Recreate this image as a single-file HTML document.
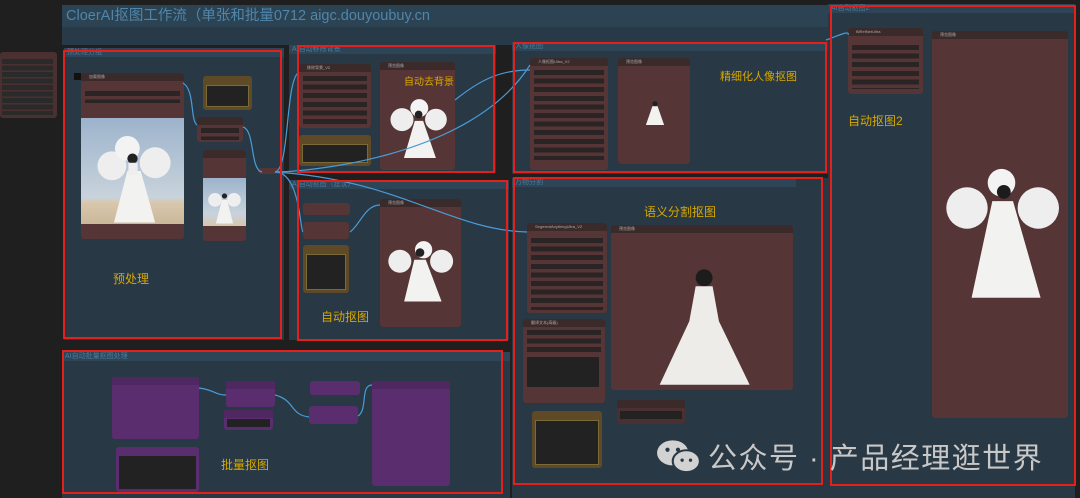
<!DOCTYPE html>
<html><head><meta charset="utf-8"><style>
*{margin:0;padding:0;box-sizing:border-box}
body{width:1080px;height:498px;background:#1f1f1f;position:relative;overflow:hidden;font-family:"Liberation Sans","Noto Sans CJK SC",sans-serif}
div{position:absolute}
.g{background:#283844}
.gh{background:#2d4557;height:9px;left:0;right:0;top:0;font-size:7px;color:#4d7b9b;padding-left:3px;line-height:9px}
.r{border:2px solid #e3201c}
.n{background:#553535;border-radius:3px}
.nh{background:#3b2a2a;height:8px;left:0;right:0;top:0;border-radius:3px 3px 0 0;font-size:4px;color:#aaa;padding-left:8px;line-height:8px}
.rows{left:4px;right:4px;background:repeating-linear-gradient(#2a2424 0 5px,transparent 5px 8.6px)}
.note{background:#5e4a26;border-radius:3px}
.note i{position:absolute;left:3px;right:3px;top:9px;bottom:3px;background:#222;border:1px solid #7a6a3a}
.p{background:#5a2d6e;border-radius:3px}
.ph{background:#4f2862;height:8px;left:0;right:0;top:0}
.lab{color:#d8a800;font-size:12px;white-space:nowrap}
.id{background:#111;width:7px;height:7px}
svg{position:absolute}
</style></head><body>
<!-- groups -->
<div class="g" style="left:62px;top:5px;width:768px;height:40px;background:#283a48"></div>
<div style="left:62px;top:5px;width:768px;height:22px;background:#2c4354;color:#4f86aa;font-size:14.5px;line-height:22px;padding-left:4px">CloerAI抠图工作流（单张和批量0712 aigc.douyoubuy.cn</div>
<div class="g" style="left:64px;top:48px;width:220px;height:292px"><div class="gh">预处理分组</div></div>
<div class="g" style="left:289px;top:45px;width:207px;height:128px"><div class="gh">AI自动移除背景</div></div>
<div class="g" style="left:289px;top:180px;width:220px;height:160px"><div class="gh">AI自动抠图（建议）</div></div>
<div class="g" style="left:512px;top:42px;width:316px;height:132px"><div class="gh">人像抠图</div></div>
<div class="g" style="left:512px;top:178px;width:284px;height:320px"><div class="gh">万物分割</div></div>
<div class="g" style="left:62px;top:352px;width:448px;height:146px"><div class="gh">AI自动批量抠图处理</div></div>
<div class="g" style="left:828px;top:4px;width:247px;height:494px"><div class="gh">AI自动抠图2</div></div>
<div style="left:796px;top:178px;width:32px;height:320px;background:#283844"></div>
<!-- left panel -->
<div class="n" style="left:0;top:52px;width:57px;height:66px;background:#4a3030"><div class="rows" style="left:2px;top:7px;height:56px;background:repeating-linear-gradient(#2a2a2a 0 5px,transparent 5px 6.5px)"></div></div>

<!-- 预处理 -->
<div class="id" style="left:74px;top:73px"></div>
<div class="n" style="left:81px;top:73px;width:103px;height:166px"><div class="nh">加载图像</div><div class="rows" style="top:18px;height:12px"></div>
<div style="left:0;top:45px;width:103px;height:106px;background:linear-gradient(#9db3cc,#c8d3dc 75%,#d9c7ad 80%,#cbb89a)"></div>
<svg style="left:0;top:45px" width="103" height="106" viewBox="0 0 100 100"><circle cx="30" cy="45" r="14" fill="#eee"/><circle cx="72" cy="42" r="15" fill="#eee"/><circle cx="45" cy="28" r="12" fill="#f3f3f3"/><path d="M45 50 L58 50 L72 100 L32 100Z" fill="#f2f2f0"/><circle cx="50" cy="38" r="5" fill="#222"/><rect x="46" y="42" width="9" height="12" fill="#eee"/></svg></div>
<div class="note" style="left:203px;top:76px;width:49px;height:34px"><i></i></div>
<div class="n" style="left:197px;top:117px;width:46px;height:25px"><div class="nh"></div><div class="rows" style="top:11px;height:12px"></div></div>
<div class="n" style="left:203px;top:150px;width:43px;height:91px"><div class="nh"></div>
<div style="left:0;top:28px;width:43px;height:48px;background:linear-gradient(#9db3cc,#c8d3dc 75%,#d9c7ad)"></div>
<svg style="left:0;top:28px" width="43" height="48" viewBox="0 0 100 100"><circle cx="28" cy="45" r="16" fill="#eee"/><circle cx="72" cy="45" r="16" fill="#eee"/><path d="M44 45 L56 45 L70 100 L30 100Z" fill="#f2f2f0"/><circle cx="50" cy="36" r="6" fill="#222"/></svg></div>
<div class="n" style="left:258px;top:168px;width:22px;height:6px"></div>

<!-- 自动去背景 -->
<div class="n" style="left:299px;top:64px;width:72px;height:64px"><div class="nh">移除背景_V2</div><div class="rows" style="top:12px;height:50px"></div></div>
<div class="note" style="left:299px;top:135px;width:72px;height:31px"><i></i></div>
<div class="n" style="left:380px;top:62px;width:75px;height:108px"><div class="nh">预览图像</div>
<svg style="left:6px;top:28px" width="64" height="72" viewBox="0 0 100 100"><circle cx="25" cy="40" r="18" fill="#eee"/><circle cx="78" cy="40" r="17" fill="#eee"/><circle cx="52" cy="22" r="14" fill="#f3f3f3"/><path d="M45 42 L58 42 L78 100 L28 100Z" fill="#f2f2f0"/><circle cx="51" cy="32" r="6" fill="#222"/></svg></div>
<div class="lab" style="left:404px;top:73px;font-size:10px">自动去背景</div>

<!-- 人像抠图 -->
<div class="n" style="left:530px;top:58px;width:78px;height:112px"><div class="nh">人像抠图Ultra_V2</div><div class="rows" style="top:12px;height:90px"></div></div>
<div class="n" style="left:618px;top:58px;width:72px;height:106px"><div class="nh">预览图像</div>
<svg style="left:24px;top:36px" width="26" height="36" viewBox="0 0 100 100"><circle cx="50" cy="18" r="10" fill="#222"/><path d="M40 28 L60 28 L85 100 L15 100Z" fill="#f2f2f0"/></svg></div>
<div class="lab" style="left:720px;top:68px;font-size:11px">精细化人像抠图</div>

<!-- 自动抠图 -->
<div class="n" style="left:303px;top:203px;width:47px;height:12px"></div>
<div class="n" style="left:303px;top:222px;width:46px;height:17px"></div>
<div class="note" style="left:303px;top:245px;width:46px;height:48px"><i></i></div>
<div class="n" style="left:380px;top:199px;width:81px;height:128px"><div class="nh">预览图像</div>
<svg style="left:4px;top:18px" width="72" height="100" viewBox="0 0 100 100"><circle cx="22" cy="42" r="16" fill="#eee"/><circle cx="80" cy="42" r="16" fill="#eee"/><circle cx="55" cy="26" r="12" fill="#f3f3f3"/><path d="M42 40 L58 40 L80 98 L28 98Z" fill="#f2f2f0"/><circle cx="50" cy="30" r="6" fill="#222"/></svg></div>
<div class="lab" style="left:321px;top:308px">自动抠图</div>
<div class="lab" style="left:113px;top:270px">预处理</div>

<!-- 万物分割 -->
<div class="lab" style="left:644px;top:203px">语义分割抠图</div>
<div class="n" style="left:527px;top:223px;width:80px;height:90px"><div class="nh">SegmentAnythingUltra_V2</div><div class="rows" style="top:15px;height:72px"></div></div>
<div class="n" style="left:523px;top:319px;width:82px;height:84px"><div class="nh">翻译文本(高级)</div><div class="rows" style="top:11px;height:22px"></div><div style="left:4px;top:38px;width:72px;height:30px;background:#222"></div></div>
<div class="note" style="left:532px;top:411px;width:70px;height:57px"><i></i></div>
<div class="n" style="left:611px;top:225px;width:182px;height:165px"><div class="nh">预览图像</div>
<svg style="left:36px;top:38px" width="110" height="127" viewBox="0 0 100 120"><circle cx="52" cy="14" r="8" fill="#1c1c1c"/><path d="M44 22 L60 22 L66 55 L95 115 L10 115 L38 55Z" fill="#eeece8"/></svg></div>
<div class="n" style="left:617px;top:400px;width:68px;height:24px;background:#4a3030"><div class="nh"></div><div style="left:3px;top:11px;width:62px;height:8px;background:#222"></div></div>

<!-- right -->
<div class="n" style="left:848px;top:28px;width:75px;height:66px"><div class="nh">BiRefNetUltra</div><div class="rows" style="top:17px;height:44px"></div></div>
<div class="n" style="left:932px;top:31px;width:136px;height:387px"><div class="nh">预览图像</div>
<svg style="left:12px;top:130px" width="115" height="140" viewBox="0 0 100 120"><circle cx="20" cy="40" r="18" fill="#eee"/><circle cx="82" cy="40" r="18" fill="#eee"/><circle cx="50" cy="18" r="12" fill="#f3f3f3"/><circle cx="52" cy="26" r="6" fill="#1c1c1c"/><path d="M42 34 L60 34 L84 118 L24 118Z" fill="#f2f2f0"/></svg></div>
<div class="lab" style="left:848px;top:112px">自动抠图2</div>

<!-- batch -->
<div class="p" style="left:112px;top:377px;width:87px;height:62px"><div class="ph"></div></div>
<div class="p" style="left:226px;top:381px;width:49px;height:26px"><div class="ph"></div></div>
<div class="p" style="left:224px;top:410px;width:49px;height:20px"><div class="ph"></div><div style="left:3px;top:9px;width:43px;height:8px;background:#222"></div></div>
<div class="p" style="left:310px;top:381px;width:50px;height:14px"></div>
<div class="p" style="left:309px;top:406px;width:49px;height:18px"></div>
<div class="p" style="left:372px;top:381px;width:78px;height:105px"><div class="ph"></div></div>
<div class="p" style="left:116px;top:447px;width:83px;height:45px"><div style="left:3px;top:9px;right:3px;bottom:3px;background:#222"></div></div>
<div class="lab" style="left:221px;top:456px">批量抠图</div>

<!-- wires -->
<svg style="left:0;top:0" width="1080" height="498"><g fill="none" stroke="#4a9bd8" stroke-width="1.2">
<path d="M183 83 C195 90,190 120,197 125"/><path d="M243 127 C255 130,250 170,262 172"/><path d="M275 172 C290 170,285 80,299 72"/><path d="M275 172 C300 172,470 160,530 65"/><path d="M275 172 C300 172,300 230,303 232"/><path d="M275 172 C400 180,450 230,527 232"/><path d="M455 100 C480 80,500 70,530 70"/><path d="M826 40 C840 35,850 30,848 35"/><path d="M350 232 C360 225,365 205,380 205"/><path d="M199 388 C215 390,215 395,226 395"/><path d="M275 395 C295 400,290 415,309 417"/><path d="M358 416 C368 410,360 385,372 385"/></g></svg>

<!-- red boxes -->
<div class="r" style="left:63px;top:50px;width:219px;height:289px"></div>
<div class="r" style="left:297px;top:45px;width:198px;height:128px"></div>
<div class="r" style="left:297px;top:180px;width:211px;height:161px"></div>
<div class="r" style="left:513px;top:42px;width:314px;height:131px"></div>
<div class="r" style="left:513px;top:177px;width:310px;height:308px"></div>
<div class="r" style="left:830px;top:5px;width:246px;height:481px"></div>
<div class="r" style="left:62px;top:350px;width:441px;height:144px"></div>

<!-- watermark -->
<svg style="left:656px;top:438px" width="46" height="36" viewBox="0 0 44 34"><ellipse cx="16" cy="14" rx="15" ry="12" fill="#d2d2d2"/><ellipse cx="29" cy="22" rx="13" ry="10.5" fill="#d2d2d2" stroke="#283844" stroke-width="2"/><circle cx="11" cy="11" r="2" fill="#283844"/><circle cx="21" cy="11" r="2" fill="#283844"/><circle cx="25" cy="21" r="1.6" fill="#283844"/><circle cx="33" cy="21" r="1.6" fill="#283844"/></svg>
<div style="left:708px;top:435px;color:#c8c8c8;font-size:29px;white-space:nowrap;letter-spacing:1.5px">公众号 · 产品经理逛世界</div>
</body></html>
